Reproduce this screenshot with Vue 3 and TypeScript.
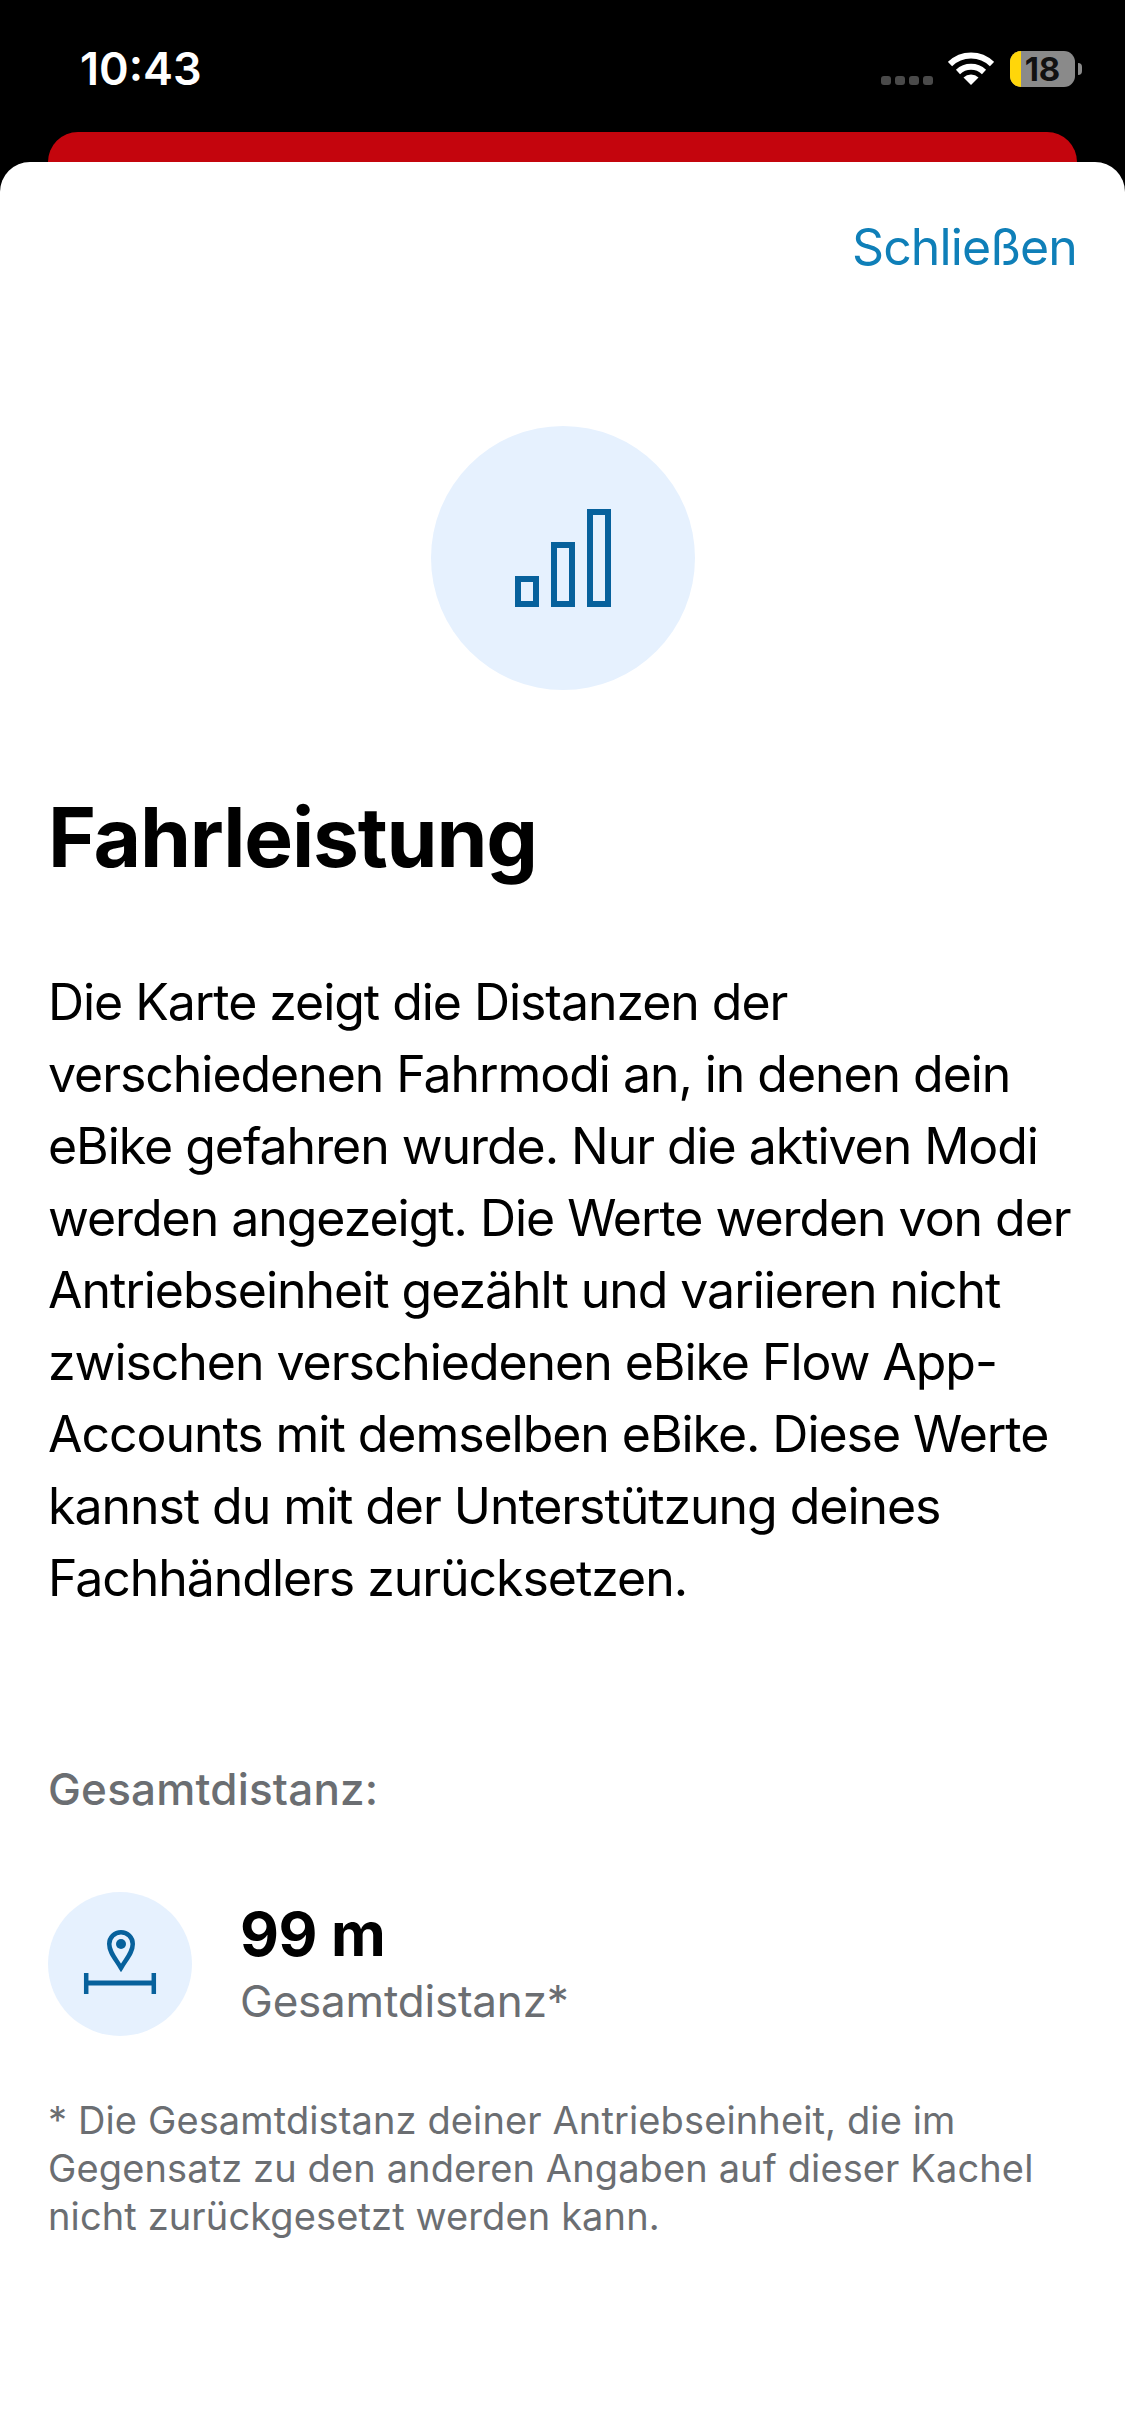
<script setup lang="ts">
const bodyLines: string[] = [
  'Die Karte zeigt die Distanzen der',
  'verschiedenen Fahrmodi an, in denen dein',
  'eBike gefahren wurde. Nur die aktiven Modi',
  'werden angezeigt. Die Werte werden von der',
  'Antriebseinheit gezählt und variieren nicht',
  'zwischen verschiedenen eBike Flow App-',
  'Accounts mit demselben eBike. Diese Werte',
  'kannst du mit der Unterstützung deines',
  'Fachhändlers zurücksetzen.',
]

const noteLines: string[] = [
  '* Die Gesamtdistanz deiner Antriebseinheit, die im',
  'Gegensatz zu den anderen Angaben auf dieser Kachel',
  'nicht zurückgesetzt werden kann.',
]
</script>

<template>
  <div class="screen">
    <div class="status-bar">
      <span class="time">10:43</span>
      <div class="status-icons">
        <div class="signal"><i></i><i></i><i></i><i></i></div>
        <svg class="wifi" width="46" height="34" viewBox="0 0 46 34">
          <path d="M2 12 A30 30 0 0 1 44 12" fill="none" stroke="#fff" stroke-width="6" />
          <path d="M10 20 A19 19 0 0 1 36 20" fill="none" stroke="#fff" stroke-width="6" />
          <path d="M23 33 L15.5 25.5 A11 11 0 0 1 30.5 25.5 Z" fill="#fff" />
        </svg>
        <div class="battery">
          <div class="battery-fill"></div>
          <span class="battery-text">18</span>
        </div>
        <div class="battery-cap"></div>
      </div>
    </div>
    <div class="back-card"></div>
    <main class="sheet">
      <div class="sheet-top"><span class="close">Schließen</span></div>
      <div class="hero">
        <svg width="264" height="264" viewBox="0 0 264 264">
          <circle cx="132" cy="132" r="132" fill="#e6f1fe" />
          <g fill="none" stroke="#07619c" stroke-width="6">
            <rect x="87" y="153" width="18" height="25" />
            <rect x="123" y="119" width="18" height="59" />
            <rect x="159" y="86" width="18" height="92" />
          </g>
        </svg>
      </div>
      <h1 class="title">Fahrleistung</h1>
      <p class="body-text">
        <span v-for="line in bodyLines" :key="line" class="line">{{ line }}</span>
      </p>
      <h2 class="section-label">Gesamtdistanz:</h2>
      <div class="stat">
        <svg width="144" height="144" viewBox="0 0 144 144">
          <circle cx="72" cy="72" r="72" fill="#e6f1fe" />
          <path d="M73 76 C67 66 61.25 60 61.25 52 A11.75 11.75 0 0 1 84.75 52 C84.75 60 79 66 73 76 Z" fill="none" stroke="#07619c" stroke-width="4.5" />
          <circle cx="73" cy="52" r="5" fill="#07619c" />
          <path d="M36 91 H108" fill="none" stroke="#07619c" stroke-width="5" />
          <path d="M38.2 81 V102 M105.8 81 V102" fill="none" stroke="#07619c" stroke-width="4.5" />
        </svg>
        <div class="stat-text">
          <div class="stat-value">99 m</div>
          <div class="stat-name">Gesamtdistanz*</div>
        </div>
      </div>
      <p class="note">
        <span v-for="line in noteLines" :key="line" class="line">{{ line }}</span>
      </p>
    </main>
  </div>
</template>

<style>
html, body {
  margin: 0;
  background: #000;
}
</style>

<style scoped>
.screen {
  width: 1125px;
  height: 2436px;
  overflow: hidden;
  background: #000;
  display: flex;
  flex-direction: column;
  font-family: Inter, "Liberation Sans", sans-serif;
}
.status-bar {
  height: 132px;
  flex: none;
  box-sizing: border-box;
  padding: 47px 43px 0 80px;
  display: flex;
  justify-content: space-between;
  align-items: flex-start;
}
.time {
  color: #fff;
  font-size: 45px;
  line-height: 44px;
  font-weight: 600;
}
.status-icons {
  display: flex;
  align-items: center;
  margin-top: 4px;
}
.signal {
  display: flex;
  gap: 4px;
  margin: 23px 15px 0 0;
}
.signal i {
  width: 10px;
  height: 9px;
  border-radius: 3px;
  background: #4a4a4a;
}
.wifi {
  margin-right: 16px;
}
.battery {
  position: relative;
  width: 65px;
  height: 36px;
  border-radius: 11px;
  background: #8a8a8a;
}
.battery-fill {
  width: 11px;
  height: 36px;
  border-radius: 11px 0 0 11px;
  background: #ffd60a;
}
.battery-text {
  position: absolute;
  top: 0;
  left: 0;
  width: 65px;
  text-align: center;
  font-size: 33px;
  line-height: 36px;
  font-weight: 700;
  color: #111;
}
.battery-cap {
  width: 4px;
  height: 12px;
  margin-left: 3px;
  border-radius: 0 4px 4px 0;
  background: #8a8a8a;
}
.back-card {
  height: 30px;
  flex: none;
  margin: 0 48px;
  border-radius: 30px 30px 0 0;
  background: #c4050d;
}
.sheet {
  flex: 1;
  background: #fff;
  border-radius: 30px 30px 0 0;
  padding: 0 48px;
}
.sheet-top {
  display: flex;
  justify-content: flex-end;
  padding-top: 57px;
}
.close {
  font-size: 50px;
  line-height: 56px;
  letter-spacing: -0.9px;
  color: #0f7fb8;
}
.hero {
  display: flex;
  justify-content: center;
  margin-top: 151px;
}
.hero svg,
.stat svg {
  display: block;
  flex: none;
}
.title {
  margin: 98px 0 0;
  font-size: 82px;
  line-height: 100px;
  letter-spacing: -1.2px;
  font-weight: 700;
  color: #000;
}
.body-text {
  margin: 78px 0 0;
  font-size: 50px;
  line-height: 72px;
  letter-spacing: -1.05px;
  color: #000;
}
.line {
  display: block;
  white-space: nowrap;
}
.section-label {
  margin: 147px 0 0;
  font-size: 44px;
  line-height: 56px;
  letter-spacing: 0.2px;
  font-weight: 500;
  color: #6b6e72;
}
.stat {
  display: flex;
  align-items: center;
  gap: 48px;
  margin-top: 75px;
}
.stat-value {
  font-size: 60px;
  line-height: 70px;
  letter-spacing: -0.4px;
  font-weight: 700;
  color: #000;
}
.stat-name {
  margin-top: 4px;
  font-size: 44px;
  line-height: 56px;
  letter-spacing: -0.2px;
  color: #6b6e72;
}
.note {
  margin: 60px 0 0;
  font-size: 38px;
  line-height: 48px;
  letter-spacing: 0.12px;
  color: #6b6e72;
}
</style>
